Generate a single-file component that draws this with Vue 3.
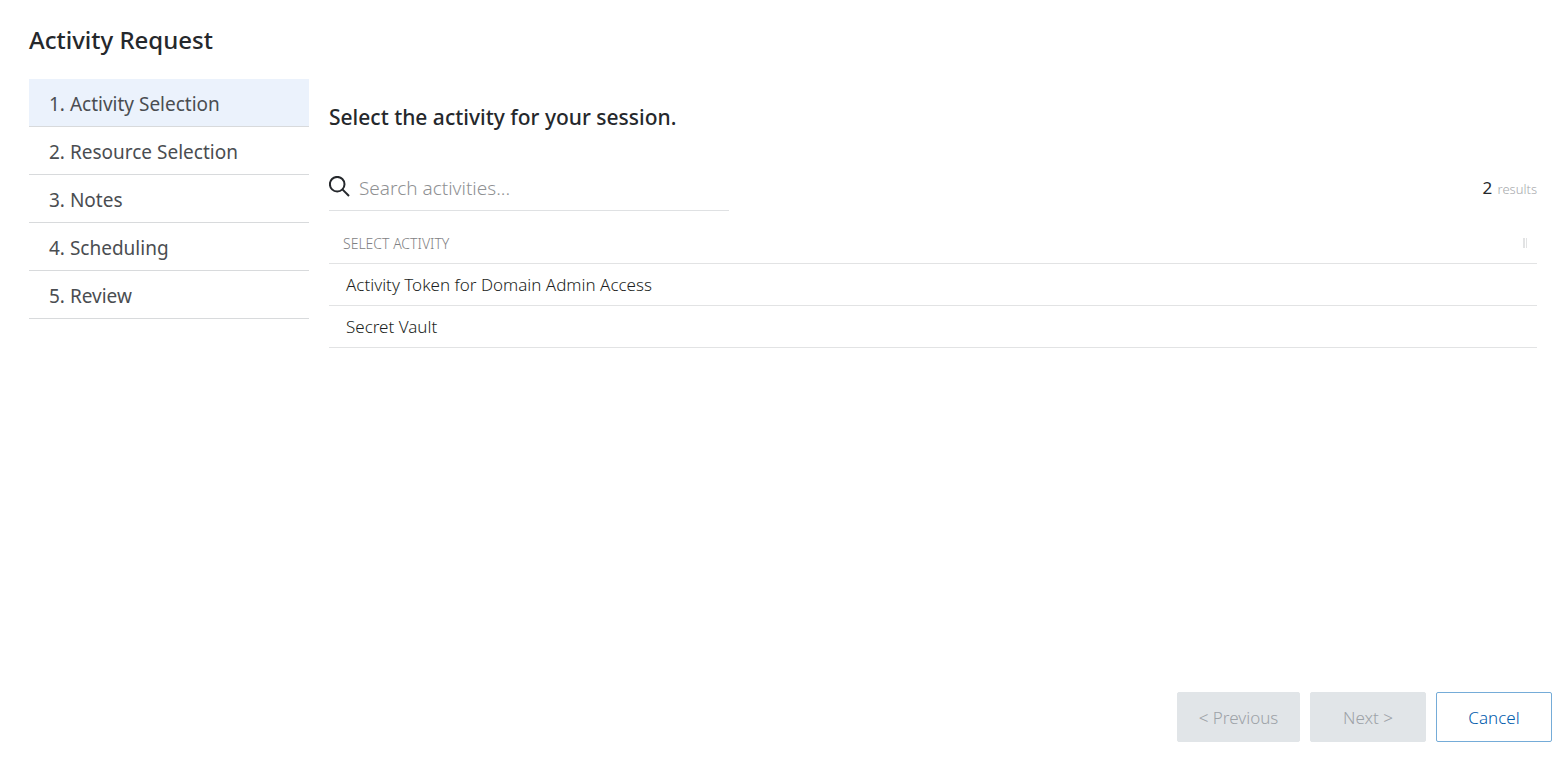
<script setup>
import { computed, ref } from 'vue'

const steps = ['Activity Selection', 'Resource Selection', 'Notes', 'Scheduling', 'Review']
const current = ref(0)
const query = ref('')
const activities = ['Activity Token for Domain Admin Access', 'Secret Vault']
const shown = computed(() =>
  activities.filter((name) => name.toLowerCase().includes(query.value.toLowerCase()))
)
</script>

<template>
  <div class="page">
    <h1 class="title">Activity Request</h1>
    <div class="body">
      <nav class="steps" aria-label="Request steps">
        <button
          v-for="(step, i) in steps"
          :key="step"
          type="button"
          class="step"
          :class="{ active: i === current }"
          :aria-current="i === current ? 'step' : undefined"
          @click="current = i"
        >{{ i + 1 }}. {{ step }}</button>
      </nav>
      <main class="content">
        <h2 class="heading">Select the activity for your session.</h2>
        <div class="toolbar">
          <div class="search">
            <label for="activity-search" class="search-label" aria-label="Search activities">
              <svg class="search-icon" viewBox="0 0 22 24" aria-hidden="true">
                <circle cx="8.2" cy="8.2" r="7.3" />
                <path d="M13.4 13.4L20 20" />
              </svg>
            </label>
            <input
              id="activity-search"
              v-model="query"
              class="search-input"
              type="text"
              placeholder="Search activities..."
            />
          </div>
          <div class="count"><span class="number">{{ shown.length }}</span> results</div>
        </div>
        <table class="activities">
          <thead>
            <tr>
              <th scope="col">
                <div class="column-head">
                  <span>SELECT ACTIVITY</span>
                  <span class="grip"></span>
                </div>
              </th>
            </tr>
          </thead>
          <tbody>
            <tr v-for="name in shown" :key="name">
              <td>{{ name }}</td>
            </tr>
          </tbody>
        </table>
      </main>
    </div>
    <footer class="actions">
      <button type="button" class="action previous" disabled>&lt; Previous</button>
      <button type="button" class="action" disabled>Next &gt;</button>
      <button type="button" class="action cancel">Cancel</button>
    </footer>
  </div>
</template>

<style>
body {
  margin: 0;
  background: #fff;
}
</style>

<style scoped>
.page {
  box-sizing: border-box;
  min-height: 100vh;
  display: flex;
  flex-direction: column;
  padding: 22px 14px 18px 29px;
  font-family: "Noto Sans", "Open Sans", sans-serif;
  font-weight: 300;
  color: #1c1f23;
}
.page * {
  box-sizing: border-box;
}
button,
input {
  font: inherit;
}
.title {
  margin: 0;
  color: #25282c;
  font-size: 24px;
  line-height: 36px;
  font-weight: 500;
}
.body {
  flex: 1;
  display: flex;
  gap: 20px;
  padding: 21px 15px 0 0;
}
.steps {
  flex: 0 0 280px;
  display: flex;
  flex-direction: column;
}
.step {
  height: 48px;
  padding: 2px 20px 0;
  border: 0;
  border-bottom: 1px solid #d8dadc;
  background: #fff;
  color: #4a4d51;
  font-size: 19px;
  font-weight: 400;
  line-height: 24px;
  text-align: left;
}
.step.active {
  background: #ebf2fc;
}
.content {
  flex: 1;
  min-width: 0;
  padding-top: 23px;
}
.heading {
  margin: 0;
  color: #25282c;
  font-size: 21px;
  line-height: 30px;
  font-weight: 500;
}
.toolbar {
  display: flex;
  justify-content: space-between;
  align-items: center;
  margin-top: 34px;
}
.search {
  flex: 0 1 400px;
  height: 45px;
  display: flex;
  align-items: center;
  border-bottom: 1px solid #dfe1e3;
}
.search-label {
  display: flex;
}
.search-icon {
  width: 22px;
  height: 24px;
  fill: none;
  stroke: #25282c;
  stroke-width: 2;
}
.search-input {
  flex: 1;
  min-width: 0;
  height: 44px;
  padding: 0 8px;
  border: 0;
  outline: 0;
  background: none;
  color: #25282c;
  font-size: 19px;
}
.search-input::placeholder {
  color: #8f9193;
  opacity: 1;
}
.count {
  color: #a6a9ac;
  font-size: 13px;
  line-height: 24px;
}
.number {
  margin-right: 2px;
  color: #25282c;
  font-size: 17px;
  font-weight: 400;
}
.activities {
  width: 100%;
  border-collapse: separate;
  border-spacing: 0;
}
.activities th {
  height: 53px;
  padding: 12px 10px 0 14px;
  border-bottom: 1px solid #e2e3e4;
  color: #7f8183;
  font-size: 14px;
  font-weight: 300;
  text-align: left;
}
.column-head {
  display: flex;
  justify-content: space-between;
  align-items: center;
}
.grip {
  width: 4px;
  height: 10px;
  border: solid #e2e3e4;
  border-width: 0 1px 0 2px;
}
.activities td {
  height: 42px;
  padding: 0 17px;
  border-bottom: 1px solid #e2e3e4;
  font-size: 17px;
  line-height: 24px;
}
.actions {
  display: flex;
  justify-content: flex-end;
  gap: 10px;
}
.action {
  min-width: 116px;
  height: 50px;
  padding: 0 20px;
  border: 1px solid #e1e5e8;
  border-radius: 2px;
  background: #e1e5e8;
  color: #9da2a7;
  font-size: 17px;
}
.previous {
  min-width: 123px;
}
.cancel {
  border-color: #75acd8;
  background: #fff;
  color: #005bac;
}
</style>
